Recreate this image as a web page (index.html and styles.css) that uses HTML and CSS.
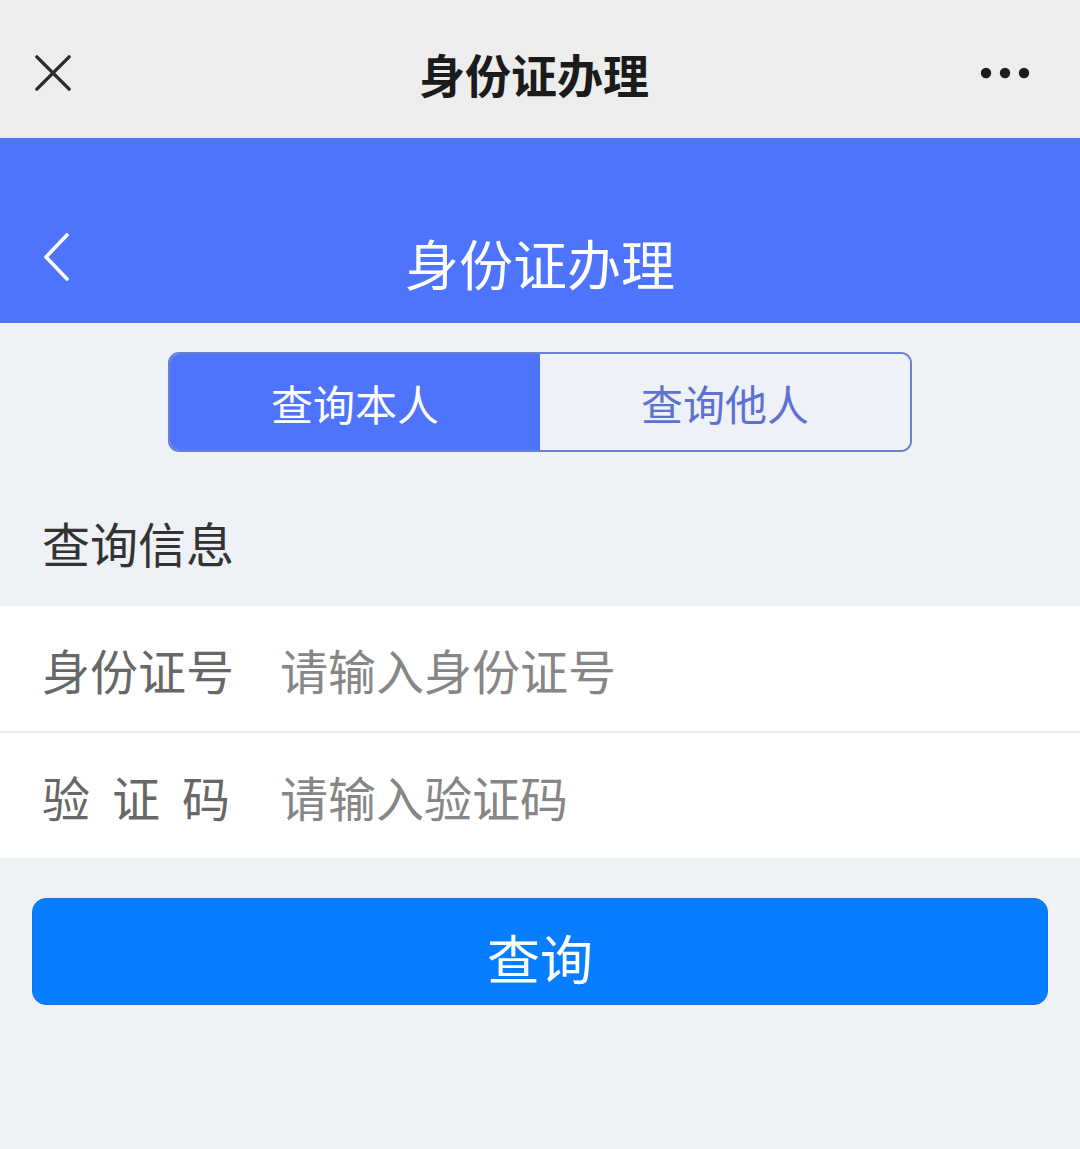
FILE: index.html
```html
<!DOCTYPE html>
<html lang="zh-CN">
<head>
<meta charset="utf-8">
<title>身份证办理</title>
<link rel="stylesheet" href="styles.css">
</head>
<body>
<div class="page">
  <div class="topbar">
    <div class="tb-left">
      <svg class="ico-close" width="40" height="40" viewBox="0 0 40 40">
        <path d="M3 3 L37 37 M37 3 L3 37" stroke="#2b2b2b" stroke-width="3.6" stroke-linecap="round" fill="none"/>
      </svg>
    </div>
    <div class="tb-title">身份证办理</div>
    <div class="tb-right">
      <svg class="ico-more" width="50" height="14" viewBox="0 0 50 14">
        <circle cx="6" cy="7" r="5.2" fill="#1c1c1c"/>
        <circle cx="25" cy="7" r="5.2" fill="#1c1c1c"/>
        <circle cx="44" cy="7" r="5.2" fill="#1c1c1c"/>
      </svg>
    </div>
  </div>

  <div class="header">
    <div class="hd-row">
      <div class="hd-left">
        <svg class="ico-back" width="30" height="48" viewBox="0 0 30 48">
          <path d="M25 2 L4 24 L25 46" stroke="#ffffff" stroke-width="3.6" stroke-linecap="round" stroke-linejoin="round" fill="none"/>
        </svg>
      </div>
      <div class="hd-title">身份证办理</div>
      <div></div>
    </div>
  </div>

  <div class="segment">
    <div class="seg-item active">查询本人</div>
    <div class="seg-item">查询他人</div>
  </div>

  <div class="section-label">查询信息</div>

  <div class="form">
    <div class="row">
      <div class="label">身份证号</div>
      <input class="field" type="text" placeholder="请输入身份证号">
    </div>
    <div class="divider"></div>
    <div class="row">
      <div class="label justify">验 证 码</div>
      <input class="field" type="text" placeholder="请输入验证码">
    </div>
  </div>

  <div class="btn-wrap">
    <button class="btn" type="button">查询</button>
  </div>
</div>
</body>
</html>
```

FILE: styles.css
```css
html, body {
  margin: 0;
  padding: 0;
}
body {
  background: #eef1f5;
  font-family: "Noto Sans CJK SC", "Noto Sans", sans-serif;
}
.page {
  width: 1080px;
  min-height: 1149px;
  background: #eef1f5;
}

/* top bar */
.topbar {
  height: 138px;
  background: #ededed;
  display: grid;
  grid-template-columns: 1fr auto 1fr;
  align-items: center;
  padding-top: 8px;
  box-sizing: border-box;
}
.tb-left {
  padding-left: 34px;
  display: flex;
  align-items: center;
}
.ico-close {
  width: 38px;
  height: 38px;
  display: block;
}
.tb-title {
  font-size: 46px;
  font-weight: 700;
  color: #1b1b1b;
  line-height: 1;
  margin-right: 12px;
}
.tb-right {
  display: flex;
  justify-content: flex-end;
  padding-right: 50px;
}
.ico-more {
  display: block;
}

/* blue header */
.header {
  height: 185px;
  background: #4e74fd;
  box-sizing: border-box;
  padding-top: 88px;
}
.hd-row {
  height: 74px;
  display: grid;
  grid-template-columns: 1fr auto 1fr;
  align-items: center;
}
.hd-left {
  padding-left: 42px;
  display: flex;
  align-items: center;
  margin-bottom: 12px;
}
.ico-back {
  display: block;
}
.hd-title {
  color: #ffffff;
  font-size: 54px;
  line-height: 1;
  letter-spacing: 0;
}

/* segmented control */
.segment {
  margin: 29px 0 0 168px;
  width: 744px;
  height: 100px;
  box-sizing: border-box;
  border: 2px solid #6a80d2;
  border-radius: 11px;
  overflow: hidden;
  display: flex;
}
.seg-item {
  flex: 1;
  display: flex;
  align-items: center;
  justify-content: center;
  font-size: 42px;
  color: #5b72d2;
  background: #eef1f7;
}
.seg-item.active {
  background: #4e74fd;
  color: #ffffff;
}

/* section label */
.section-label {
  padding: 66px 0 40px 42px;
  font-size: 48px;
  line-height: 48px;
  color: #333333;
}

/* form */
.form {
  background: #ffffff;
}
.row {
  height: 125px;
  display: flex;
  align-items: center;
  padding-left: 42px;
}
.divider {
  height: 2px;
  background: #ececec;
}
.label {
  width: 192px;
  font-size: 48px;
  color: #676767;
  flex: none;
}
.label.justify {
  text-align: justify;
  text-align-last: justify;
  width: 188px;
}
.field {
  margin-left: 46px;
  border: none;
  outline: none;
  background: transparent;
  font-family: "Noto Sans CJK SC", "Noto Sans", sans-serif;
  font-size: 48px;
  color: #333333;
  padding: 0;
  width: 700px;
}
.label.justify + .field {
  margin-left: 50px;
}
.field::placeholder {
  color: #868686;
}

/* button */
.btn-wrap {
  padding: 40px 32px 0 32px;
}
.btn {
  width: 100%;
  height: 107px;
  border: 1px solid #1872e6;
  border-radius: 14px;
  background: #077dff;
  color: #ffffff;
  font-family: "Noto Sans CJK SC", "Noto Sans", sans-serif;
  font-size: 53px;
  padding: 10px 0 0 0;
  display: block;
}
```
